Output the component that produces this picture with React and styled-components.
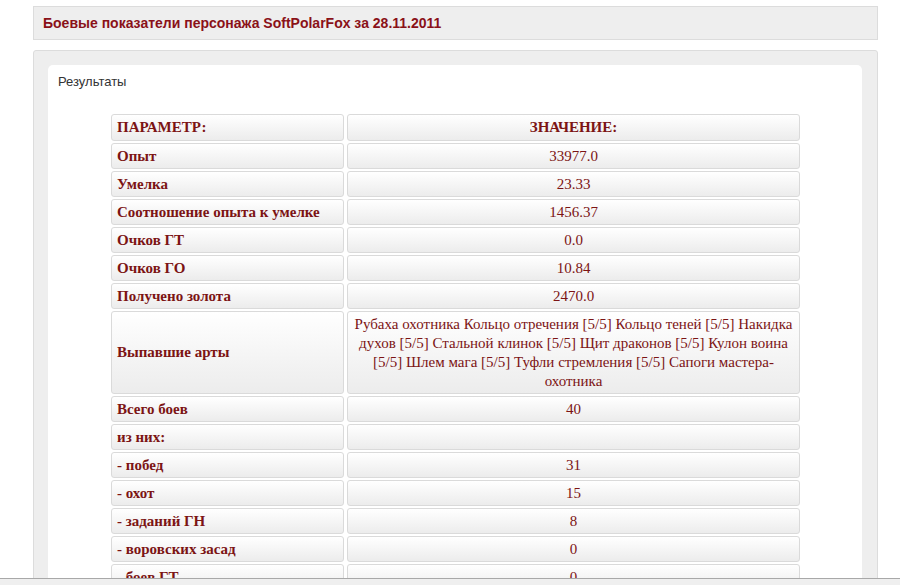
import React from "react";
import styled, { createGlobalStyle } from "styled-components";

const Global = createGlobalStyle`
  html, body { margin: 0; padding: 0; background: #fff; }
  body { font-family: "Liberation Sans", Arial, sans-serif; }
`;

const Page = styled.div`
  padding: 6px 22px 40px 33px;
  display: flex;
  flex-direction: column;
  gap: 10px;
`;

const TitleBar = styled.div`
  background: #eeeeee;
  border: 1px solid #dcdcdc;
  height: 32px;
  display: flex;
  align-items: center;
  padding: 0 9px;
`;

const Title = styled.h1`
  margin: 0;
  font-family: "Liberation Sans", Arial, sans-serif;
  font-size: 14px;
  font-weight: bold;
  color: #8a1118;
`;

const Panel = styled.div`
  background: #eeeeee;
  border: 1px solid #dcdcdc;
  border-radius: 3px 3px 0 0;
  padding: 14px 15px 0 14px;
`;

const Inner = styled.div`
  background: #fff;
  border-radius: 5px;
  padding: 9px 60px 20px 10px;
`;

const SectionLabel = styled.div`
  font-family: "Liberation Sans", Arial, sans-serif;
  font-size: 13px;
  color: #333;
  line-height: 15px;
  margin-bottom: 23px;
`;

const Table = styled.table`
  border-collapse: separate;
  border-spacing: 3px 2px;
  margin: 0 0 0 50px;
  width: 694px;
  table-layout: fixed;
  font-family: "Liberation Serif", "Times New Roman", serif;
  font-size: 15px;
  color: #7c1414;
`;

const Cell = styled.td`
  border: 1px solid #dadada;
  border-radius: 3px;
  background: linear-gradient(#ffffff, #ececec);
  padding: ${(p) => (p.$head ? "2.5px 5px 3.5px" : "2.5px 5px")};
  line-height: 19px;
  vertical-align: middle;
  text-align: ${(p) => (p.$center ? "center" : "left")};
  font-weight: ${(p) => (p.$bold ? "bold" : "normal")};
  width: ${(p) => (p.$wide ? "441px" : "221px")};
`;

const Footer = styled.div`
  position: fixed;
  left: 0;
  right: 0;
  bottom: 0;
  height: 6px;
  background: #efefef;
  border-top: 1px solid #a8a8a8;
`;

const rows = [
  ["Опыт", "33977.0"],
  ["Умелка", "23.33"],
  ["Соотношение опыта к умелке", "1456.37"],
  ["Очков ГТ", "0.0"],
  ["Очков ГО", "10.84"],
  ["Получено золота", "2470.0"],
  [
    "Выпавшие арты",
    "Рубаха охотника Кольцо отречения [5/5] Кольцо теней [5/5] Накидка духов [5/5] Стальной клинок [5/5] Щит драконов [5/5] Кулон воина [5/5] Шлем мага [5/5] Туфли стремления [5/5] Сапоги мастера-охотника",
  ],
  ["Всего боев", "40"],
  ["из них:", ""],
  ["- побед", "31"],
  ["- охот", "15"],
  ["- заданий ГН", "8"],
  ["- воровских засад", "0"],
  ["- боев ГТ", "0"],
];

export default function App() {
  return (
    <>
      <Global />
      <Page>
        <TitleBar>
          <Title>Боевые показатели персонажа SoftPolarFox за 28.11.2011</Title>
        </TitleBar>
        <Panel>
          <Inner>
            <SectionLabel>Результаты</SectionLabel>
            <Table>
              <tbody>
                <tr>
                  <Cell $bold $head>ПАРАМЕТР:</Cell>
                  <Cell $bold $head $center $wide>ЗНАЧЕНИЕ:</Cell>
                </tr>
                {rows.map(([k, v]) => (
                  <tr key={k}>
                    <Cell $bold>{k}</Cell>
                    <Cell $center $wide>{v}</Cell>
                  </tr>
                ))}
              </tbody>
            </Table>
          </Inner>
        </Panel>
      </Page>
      <Footer />
    </>
  );
}
